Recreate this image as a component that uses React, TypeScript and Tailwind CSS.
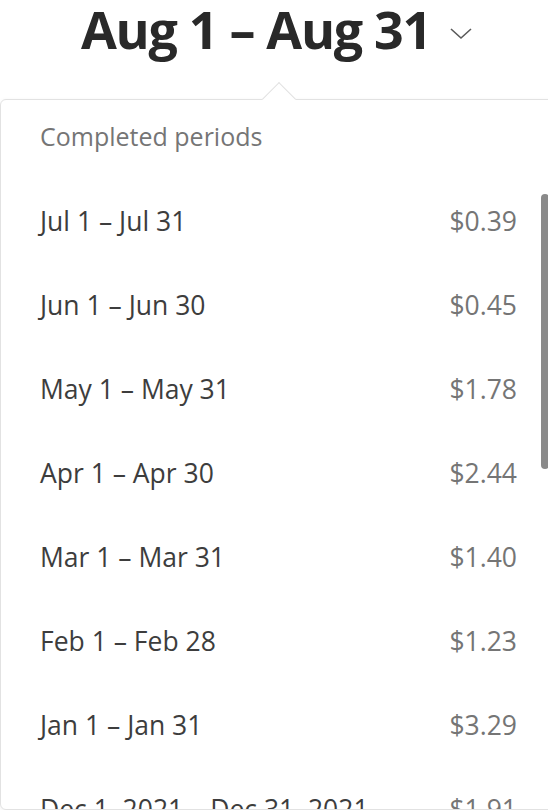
import React from "react";

const PERIODS: { label: string; amount: string }[] = [
    { label: "Jul 1 – Jul 31", amount: "$0.39" },
    { label: "Jun 1 – Jun 30", amount: "$0.45" },
    { label: "May 1 – May 31", amount: "$1.78" },
    { label: "Apr 1 – Apr 30", amount: "$2.44" },
    { label: "Mar 1 – Mar 31", amount: "$1.40" },
    { label: "Feb 1 – Feb 28", amount: "$1.23" },
    { label: "Jan 1 – Jan 31", amount: "$3.29" },
    { label: "Dec 1, 2021 – Dec 31, 2021", amount: "$1.91" },
];

export default function App() {
    return (
        <div
            className="w-[548px] h-[810px] overflow-hidden bg-white"
            style={{ fontFamily: '"Open Sans", "Noto Sans", sans-serif' }}
        >
            <div className="flex h-[99px] items-start justify-center gap-[18px] pl-[6px]">
                <h1 className="text-[52px] font-bold leading-[58px] tracking-[-1.3px] text-[#292929]">
                    Aug 1 – Aug 31
                </h1>
                <svg
                    width="24"
                    height="14"
                    viewBox="0 0 24 14"
                    className="mt-[27px]"
                    fill="none"
                    stroke="#5a5a5a"
                    strokeWidth="1.6"
                >
                    <path d="M2 2 L12 11 L22 2" />
                </svg>
            </div>

            <div className="relative h-[711px] w-[560px] rounded-l-md border border-[#e2e2e2] bg-white shadow-[0_1px_4px_rgba(0,0,0,0.06)]">
                {/* caret pointing up at the trigger */}
                <div className="absolute left-[266px] top-[-13px] h-[24px] w-[24px] rotate-45 border-l border-t border-[#e2e2e2] bg-white" />

                <div className="h-full overflow-hidden rounded-l-md">
                    <div className="flex h-[80px] items-center pb-[6px] pl-[39px] text-[25px] text-[#757575]">
                        Completed periods
                    </div>
                    {PERIODS.map((p) => (
                        <div
                            key={p.label}
                            className="flex h-[84px] items-center justify-between pl-[39px] pr-[42px] text-[26.5px]"
                        >
                            <span className="text-[#3d3d3d]">{p.label}</span>
                            <span className="text-[#757575]">{p.amount}</span>
                        </div>
                    ))}
                </div>

                {/* scrollbar thumb */}
                <div className="absolute left-[540px] top-[94px] h-[275px] w-[8px] rounded-full bg-[#8a8a8a]" />
            </div>
        </div>
    );
}
